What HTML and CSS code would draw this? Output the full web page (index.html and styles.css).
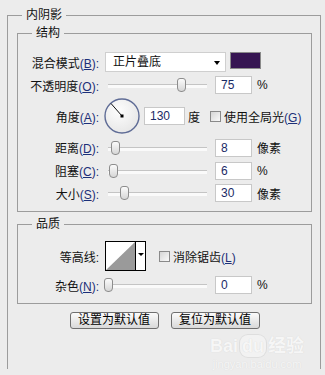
FILE: index.html
```html
<!DOCTYPE html>
<html lang="zh-CN">
<head>
  <meta charset="UTF-8" />
  <title>内阴影</title>
  <link rel="stylesheet" href="styles.css">
</head>
<body>
  <div class="panel">
    <fieldset class="group outer">
      <legend>内阴影</legend>

      <fieldset class="group box">
        <legend>结构</legend>
        <div class="rows rows-struct">
          <div class="row">
            <label class="lbl">混合模式<span class="key">(<u>B</u>):</span></label>
            <div class="select">正片叠底<span class="caret"></span></div>
            <span class="swatch"></span>
          </div>
          <div class="row">
            <label class="lbl">不透明度<span class="key">(<u>O</u>):</span></label>
            <div class="slider"><span class="thumb" style="left:73px"></span></div>
            <span class="field">75</span><span class="unit">%</span>
          </div>
          <div class="row">
            <label class="lbl">角度<span class="key">(<u>A</u>):</span></label>
            <svg class="dial" width="36" height="36" viewBox="0 0 36 36">
              <defs>
                <radialGradient id="dialFill" cx="40%" cy="35%" r="70%">
                  <stop offset="0" stop-color="#fdfdfd" />
                  <stop offset="1" stop-color="#e6e6e6" />
                </radialGradient>
              </defs>
              <circle cx="18" cy="18" r="17" fill="url(#dialFill)" stroke="#5f6c96" stroke-width="1.4" />
              <line x1="18" y1="18" x2="7" y2="5.5" stroke="#111" stroke-width="1" />
              <rect x="16.5" y="16.5" width="3" height="3" fill="#000" />
            </svg>
            <span class="field field-angle">130</span><span class="unit">度</span>
            <span class="check check-global"></span><span class="check-text">使用全局光<span class="key">(<u>G</u>)</span></span>
          </div>
          <div class="row">
            <label class="lbl">距离<span class="key">(<u>D</u>):</span></label>
            <div class="slider"><span class="thumb" style="left:7px"></span></div>
            <span class="field">8</span><span class="unit">像素</span>
          </div>
          <div class="row">
            <label class="lbl">阻塞<span class="key">(<u>C</u>):</span></label>
            <div class="slider"><span class="thumb" style="left:5px"></span></div>
            <span class="field">6</span><span class="unit">%</span>
          </div>
          <div class="row">
            <label class="lbl">大小<span class="key">(<u>S</u>):</span></label>
            <div class="slider"><span class="thumb" style="left:16px"></span></div>
            <span class="field">30</span><span class="unit">像素</span>
          </div>
        </div>
      </fieldset>

      <fieldset class="group box box-quality">
        <legend>品质</legend>
        <div class="rows rows-quality">
          <div class="row">
            <label class="lbl">等高线:</label>
            <div class="contour">
              <svg class="contour-preview" width="29" height="28" viewBox="0 0 29 28">
                <rect width="29" height="28" fill="#fff" />
                <polygon points="0,28 29,0 29,28" fill="#9a9a9a" />
              </svg>
              <span class="contour-arrow"><span class="caret"></span></span>
            </div>
            <span class="check check-aa"></span><span class="check-text">消除锯齿<span class="key">(<u>L</u>)</span></span>
          </div>
          <div class="row">
            <label class="lbl">杂色<span class="key">(<u>N</u>):</span></label>
            <div class="slider"><span class="thumb" style="left:0"></span></div>
            <span class="field">0</span><span class="unit">%</span>
          </div>
        </div>
      </fieldset>

      <div class="buttons">
        <button class="btn">设置为默认值</button>
        <button class="btn">复位为默认值</button>
      </div>
    </fieldset>

    <div class="watermark">
      <span class="wm-logo">Bai<span class="wm-paw">du</span>经验</span>
      <span class="wm-url">jingyan.baidu.com</span>
    </div>
  </div>
</body>
</html>
```

FILE: styles.css
```css
* {
  box-sizing: border-box;
}
html, body {
  margin: 0;
  height: 100%;
  overflow: hidden;
}
body {
  background: #ececec;
  color: #111;
  font-family: "Liberation Sans", "Noto Sans CJK SC", sans-serif;
  font-size: 12px;
  padding: 7px 0 0 7px;
}
.panel {
  position: relative;
  height: 100%;
}
.group {
  margin: 0;
  border: 1px solid #9c9c9c;
  min-width: 0;
}
.group legend {
  line-height: 16px;
  height: 16px;
  padding: 0 4px;
}
.outer {
  width: 314px;
  border-bottom: none;
  padding: 2px 8px 40px 9px;
}
.outer > legend {
  margin-left: 5px;
}
.box {
  padding: 11px 0 9px 0;
}
.box > legend {
  margin-left: 14px;
}
.box-quality {
  margin-top: 4px;
  padding-top: 9px;
}
.rows {
  display: grid;
  row-gap: 4px;
}
.rows-struct {
  grid-template-rows: 20px 18px 36px 19px 19px 18px;
}
.rows-quality {
  grid-template-rows: 30px 18px;
  row-gap: 5px;
}
.row {
  display: flex;
  align-items: center;
  height: 100%;
}
.lbl {
  width: 81px;
  margin-right: 5px;
  text-align: right;
  white-space: nowrap;
  flex-shrink: 0;
}
.key {
  color: #1c2f78;
}
.key u {
  text-underline-offset: 1px;
}

/* controls */
.select {
  position: relative;
  margin-left: 1px;
  width: 121px;
  height: 20px;
  background: #fff;
  border: 1px solid #cfcfcf;
  padding-left: 7px;
  line-height: 18px;
  font-size: 12px;
}
.caret {
  position: absolute;
  right: 5px;
  top: 8px;
  width: 0;
  height: 0;
  border-left: 3.5px solid transparent;
  border-right: 3.5px solid transparent;
  border-top: 4px solid #000;
}
.swatch {
  align-self: flex-start;
  margin-left: 4px;
  width: 31px;
  height: 17px;
  background: #361552;
  border: 1px solid #8a8a8a;
}
.slider {
  position: relative;
  width: 107px;
  height: 14px;
  flex-shrink: 0;
}
.slider::before {
  content: "";
  position: absolute;
  left: 4px;
  right: 4px;
  top: 6px;
  height: 3px;
  background: #fafafa;
  border-top: 1px solid #c4c4c4;
}
.thumb {
  position: absolute;
  top: 0;
  width: 9px;
  height: 14px;
  background: linear-gradient(#fbfbfb, #d6d6d6);
  border: 1px solid #8d8d8d;
  border-radius: 3px 3px 4px 4px;
}
.field {
  margin-left: 4px;
  width: 37px;
  height: 18px;
  background: #fff;
  border: 1px solid #c8c8c8;
  padding-left: 5px;
  line-height: 16px;
  color: #1a2a66;
  font-size: 12px;
  flex-shrink: 0;
}
.field-angle {
  width: 41px;
}
.unit {
  margin-left: 5px;
  white-space: nowrap;
}
.row .field-angle + .unit {
  margin-left: 3px;
}
.dial {
  display: block;
  flex-shrink: 0;
}
.check {
  width: 11px;
  height: 11px;
  border: 1px solid #8a8a8a;
  background: linear-gradient(135deg, #d6d6d6, #fafafa);
  flex-shrink: 0;
}
.check-global {
  margin-left: 10px;
}
.check-aa {
  margin-left: 13px;
}
.check-text {
  margin-left: 3px;
  white-space: nowrap;
}
.contour {
  display: flex;
  margin-left: 1px;
  width: 41px;
  height: 30px;
  border: 1px solid #000;
  background: #fff;
}
.contour-preview {
  display: block;
}
.contour-arrow {
  position: relative;
  width: 10px;
  border-left: 1px solid #000;
}
.contour-arrow .caret {
  right: 1.5px;
  top: 11px;
  border-left-width: 3px;
  border-right-width: 3px;
  border-top-width: 3px;
}
.buttons {
  display: flex;
  justify-content: center;
  gap: 12px;
  margin-top: 8px;
}
.btn {
  width: 89px;
  height: 17px;
  padding: 0;
  border: 1px solid #6f6f6f;
  border-radius: 3px;
  background: linear-gradient(#fbfbfb, #d9d9d9);
  font-family: "Liberation Sans", "Noto Sans CJK SC", sans-serif;
  font-size: 12px;
  line-height: 15px;
  color: #000;
}

/* faint site watermark over the lower right */
.watermark {
  position: absolute;
  left: 203px;
  top: 328px;
  display: flex;
  flex-direction: column;
  align-items: center;
  color: #f6f6f6;
  text-shadow: 0 0 1px #d4d4d4;
}
.wm-logo {
  font-family: "Liberation Sans", "Noto Sans CJK SC", sans-serif;
  font-weight: bold;
  font-size: 18px;
  line-height: 22px;
}
.wm-paw {
  display: inline-block;
  margin: 0 2px;
  padding: 0 2px;
  border-radius: 8px;
  background: #f2f2f2;
  box-shadow: 0 0 0 1px #dedede;
}
.wm-url {
  font-size: 11px;
  line-height: 14px;
}
```
